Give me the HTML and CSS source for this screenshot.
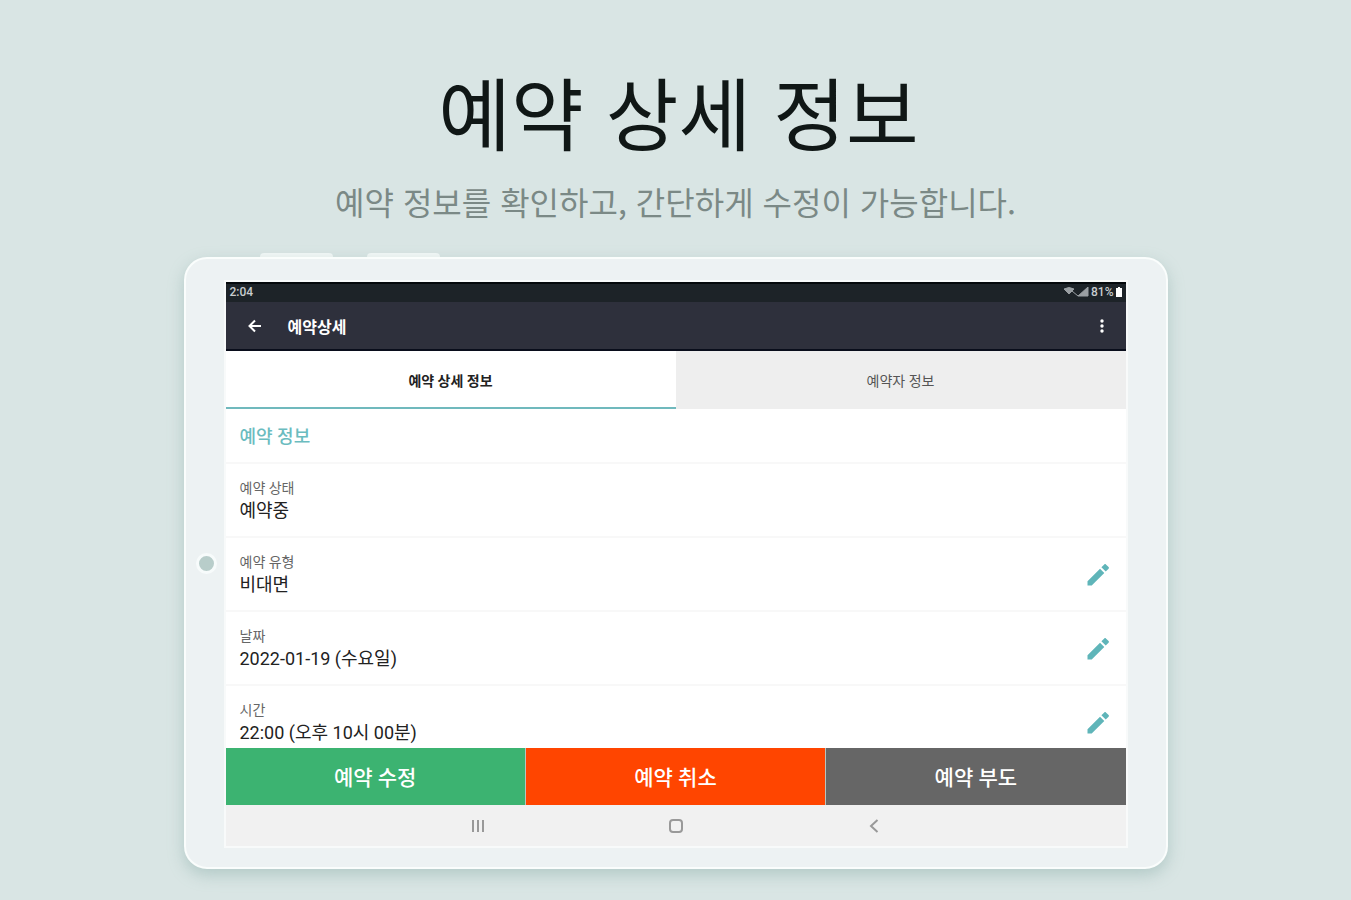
FILE: index.html
```html
<!DOCTYPE html>
<html lang="ko">
<head>
<meta charset="utf-8">
<meta name="viewport" content="width=device-width, initial-scale=1">
<title>예약 상세 정보</title>
<link rel="stylesheet" href="styles.css">
</head>
<body>
<svg class="defs" aria-hidden="true">
  <symbol id="pencil" viewBox="0 0 24 24"><path d="M1.500 18.300V22.500h4.200L18.300 10 14 5.700zM22.600 5.700c.5-.5.5-1.100 0-1.600l-2.700-2.700c-.5-.5-1.100-.5-1.600 0l-2.900 2.900 4.300 4.300z"/></symbol>
</svg>
<header class="intro">
  <h1 class="intro-title">예약 상세 정보</h1>
  <p class="intro-text">예약 정보를 확인하고, 간단하게 수정이 가능합니다.</p>
</header>
<main class="device">
  <div class="keys"><span class="key"></span><span class="key"></span></div>
  <div class="tablet">
    <span class="camera"></span>
    <div class="screen">
      <div class="status">
        <span>2:04</span>
        <span class="status-right">
          <svg class="signal" viewBox="0 0 26 10" aria-hidden="true"><path d="M1 2q5-3 10 0L6 7zM9 4l6 5M15 9h10V0z"/></svg>
          <span>81%</span>
          <svg class="battery" viewBox="0 0 6 10" aria-hidden="true"><path d="M2 0h2v1h2v9H0V1h2z"/></svg>
        </span>
      </div>
      <div class="appbar">
        <button class="icon-button" type="button" aria-label="뒤로">
          <svg class="back" viewBox="0 0 16 16" aria-hidden="true"><path d="M14 8H3M8 2.500 2.500 8 8 13.500"/></svg>
        </button>
        <h2 class="appbar-title">예약상세</h2>
        <button class="icon-button" type="button" aria-label="더보기">
          <svg class="more" viewBox="0 0 4 14" aria-hidden="true"><circle cx="2" cy="2" r="1.700"/><circle cx="2" cy="7" r="1.700"/><circle cx="2" cy="12" r="1.700"/></svg>
        </button>
      </div>
      <div class="tabs" role="tablist">
        <button class="tab tab-active" type="button" role="tab" aria-selected="true">예약 상세 정보</button>
        <button class="tab" type="button" role="tab" aria-selected="false">예약자 정보</button>
      </div>
      <section class="details">
        <h3 class="details-title">예약 정보</h3>
        <div class="row">
          <div class="field"><span class="label">예약 상태</span><span class="value">예약중</span></div>
        </div>
        <div class="row">
          <div class="field"><span class="label">예약 유형</span><span class="value">비대면</span></div>
          <button class="edit" type="button" aria-label="예약 유형 수정"><svg class="pencil"><use href="#pencil"/></svg></button>
        </div>
        <div class="row">
          <div class="field"><span class="label">날짜</span><span class="value">2022-01-19 (수요일)</span></div>
          <button class="edit" type="button" aria-label="날짜 수정"><svg class="pencil"><use href="#pencil"/></svg></button>
        </div>
        <div class="row">
          <div class="field"><span class="label">시간</span><span class="value">22:00 (오후 10시 00분)</span></div>
          <button class="edit" type="button" aria-label="시간 수정"><svg class="pencil"><use href="#pencil"/></svg></button>
        </div>
      </section>
      <div class="actions">
        <button class="action action-edit" type="button">예약 수정</button>
        <button class="action action-cancel" type="button">예약 취소</button>
        <button class="action action-noshow" type="button">예약 부도</button>
      </div>
      <nav class="navbar">
        <button class="icon-button" type="button" aria-label="최근 앱"><svg class="nav-icon" viewBox="0 0 14 14" aria-hidden="true"><path d="M2 1v12M7 1v12M12 1v12"/></svg></button>
        <button class="icon-button" type="button" aria-label="홈"><svg class="nav-icon" viewBox="0 0 14 14" aria-hidden="true"><rect x="1" y="1" width="12" height="12" rx="3"/></svg></button>
        <button class="icon-button" type="button" aria-label="이전"><svg class="nav-icon" viewBox="0 0 14 14" aria-hidden="true"><path d="M10.500 1 4 7l6.500 6"/></svg></button>
      </nav>
    </div>
  </div>
</main>
</body>
</html>
```
FILE: styles.css
```css
* {
  box-sizing: border-box;
}

body {
  margin: 0;
  min-height: 100vh;
  background: #d9e5e4;
  color: #222;
  font-family: Roboto, "Noto Sans CJK KR", sans-serif;
}

button {
  margin: 0;
  padding: 0;
  border: 0;
  background: none;
  color: inherit;
  font: inherit;
}

h1, h2, h3, p {
  margin: 0;
}

.defs {
  display: none;
}

.intro {
  padding: 51px 24px 0;
  text-align: center;
  font-family: "Noto Sans CJK KR", sans-serif;
}

.intro-title {
  padding-left: 6px;
  color: #101716;
  font-size: 79px;
  font-weight: 400;
  line-height: 120px;
}

.intro-text {
  padding-top: 6px;
  color: #7b8986;
  font-size: 32px;
  line-height: 48px;
}

.device {
  width: 90%;
  max-width: 984px;
  margin: 0 auto;
  padding: 28px 0 32px;
}

.keys {
  display: flex;
  gap: 34px;
  padding-left: 76px;
}

.key {
  width: 73px;
  height: 4px;
  border-radius: 4px 4px 0 0;
  background: #f3f8f7;
}

.tablet {
  position: relative;
  padding: 23px 40px 21px;
  border: 2px solid #fafdfc;
  border-radius: 23px;
  background: #edf2f3;
  box-shadow: 0 6px 16px rgba(120, 160, 155, 0.4);
}

.camera {
  position: absolute;
  left: 10px;
  top: 50%;
  width: 21px;
  height: 21px;
  margin-top: -10px;
  border: 3px solid #f7fbfb;
  border-radius: 50%;
  background: #b8cdca;
}

.screen {
  background: #fff;
  box-shadow: 0 0 0 2px #f8fafa;
}

.status {
  display: flex;
  justify-content: space-between;
  align-items: center;
  height: 20px;
  padding: 0 4px 2px;
  border-top: 2px solid #05090c;
  background: #1d2328;
  color: #c9cdcf;
  font-size: 12px;
  font-weight: 500;
}

.status-right {
  display: flex;
  align-items: center;
  gap: 2px;
}

.signal {
  width: 26px;
  height: 10px;
  fill: #9a9fa3;
  stroke: #9a9fa3;
}

.battery {
  width: 6px;
  height: 10px;
  fill: #fff;
}

.appbar {
  display: flex;
  align-items: center;
  height: 49px;
  padding: 0 8px 0 13px;
  border-bottom: 2px solid #090d1b;
  background: #2e303c;
  color: #fff;
}

.icon-button {
  display: grid;
  place-items: center;
  width: 32px;
  height: 32px;
}

.back {
  width: 16px;
  height: 16px;
  fill: none;
  stroke: #fff;
  stroke-width: 2;
}

.appbar-title {
  flex: 1;
  padding-left: 17px;
  font-size: 16px;
  font-weight: 700;
}

.more {
  width: 4px;
  height: 14px;
  fill: #fff;
}

.tabs {
  display: grid;
  grid-template-columns: 1fr 1fr;
}

.tab {
  height: 58px;
  background: #eee;
  color: #555;
  font-size: 14px;
}

.tab-active {
  border-top: 2px solid #fff;
  border-bottom: 2px solid #70b9bd;
  background: #fff;
  color: #222;
  font-weight: 700;
}

.details {
  max-height: 339px;
  overflow: hidden;
}

.details-title {
  height: 55px;
  padding-left: 14px;
  border-bottom: 2px solid #f8f8f8;
  color: #6bbcbf;
  font-size: 18px;
  font-weight: 500;
  line-height: 56px;
}

.row {
  display: flex;
  justify-content: space-between;
  align-items: center;
  height: 74px;
  padding: 2px 16px 0 14px;
  border-bottom: 2px solid #f8f8f8;
}

.field {
  display: flex;
  flex-direction: column;
}

.label {
  color: #666;
  font-size: 14px;
  line-height: 20px;
}

.value {
  color: #222;
  font-size: 18px;
  line-height: 26px;
}

.edit {
  display: grid;
  place-items: center;
  width: 24px;
  height: 24px;
}

.pencil {
  width: 24px;
  height: 24px;
  fill: #5fb5b9;
}

.actions {
  display: grid;
  grid-template-columns: repeat(3, 1fr);
  gap: 1px;
  background: #b9c4bd;
}

.action {
  height: 57px;
  padding-bottom: 2px;
  color: #fff;
  font-size: 21px;
  font-weight: 500;
}

.action-edit {
  background: #3cb371;
}

.action-cancel {
  background: #ff4500;
}

.action-noshow {
  background: #666;
}

.navbar {
  display: flex;
  justify-content: center;
  align-items: center;
  gap: 166px;
  height: 41px;
  background: #f1f1f1;
}

.nav-icon {
  width: 14px;
  height: 14px;
  fill: none;
  stroke: #999;
  stroke-width: 2;
}
```
